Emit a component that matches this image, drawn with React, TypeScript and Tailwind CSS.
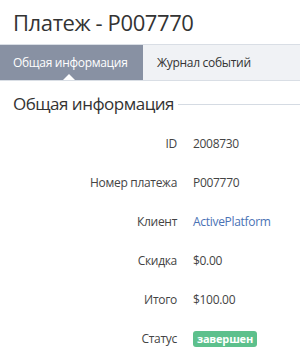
export default function App() {
  const rows: { label: string; value: React.ReactNode }[] = [
    { label: 'ID', value: '2008730' },
    { label: 'Номер платежа', value: 'P007770' },
    { label: 'Клиент', value: <a className="text-[#4a72b5]">ActivePlatform</a> },
    { label: 'Скидка', value: '$0.00' },
    { label: 'Итого', value: '$100.00' },
    {
      label: 'Статус',
      value: (
        <span className="inline-block rounded-[3px] bg-[#5dc08c] px-[4px] text-[11px] leading-[16px] font-bold tracking-[-0.2px] text-white">
          завершен
        </span>
      ),
    },
  ];

  return (
    <div className="h-[364px] w-[300px] overflow-hidden bg-white font-['Open_Sans',sans-serif] text-[#333]">
      <h1 className="px-[13px] pt-[7px] pb-[7px] text-[22px] leading-[30px] tracking-[-0.4px] text-[#333]">
        Платеж - P007770
      </h1>

      <div className="flex border-y border-[#d9dee5] bg-[#f0f2f5] text-[12px] tracking-[-0.3px]">
        <div className="relative flex h-[35px] w-[143px] items-center bg-[#8891a3] px-[13px] text-white">
          Общая информация
          <span className="absolute bottom-0 left-[63px] h-0 w-0 border-x-[6px] border-b-[6px] border-x-transparent border-b-white" />
        </div>
        <div className="flex h-[35px] items-center px-[14px] text-[#333]">
          Журнал событий
        </div>
      </div>

      <div className="flex items-center gap-[4px] pl-[13px] pt-[11px]">
        <h2 className="text-[17px] leading-[24px] tracking-[-0.5px] text-[#333]">Общая информация</h2>
        <div className="h-px flex-1 bg-[#d5dbe3]" />
      </div>

      <div className="mt-[8px] flex flex-col text-[12px] tracking-[-0.3px]">
        {rows.map((r) => (
          <div key={r.label} className="flex h-[39px] items-center">
            <div className="w-[177px] text-right text-[#444]">{r.label}</div>
            <div className="pl-[16px] text-[#444]">{r.value}</div>
          </div>
        ))}
      </div>
    </div>
  );
}
